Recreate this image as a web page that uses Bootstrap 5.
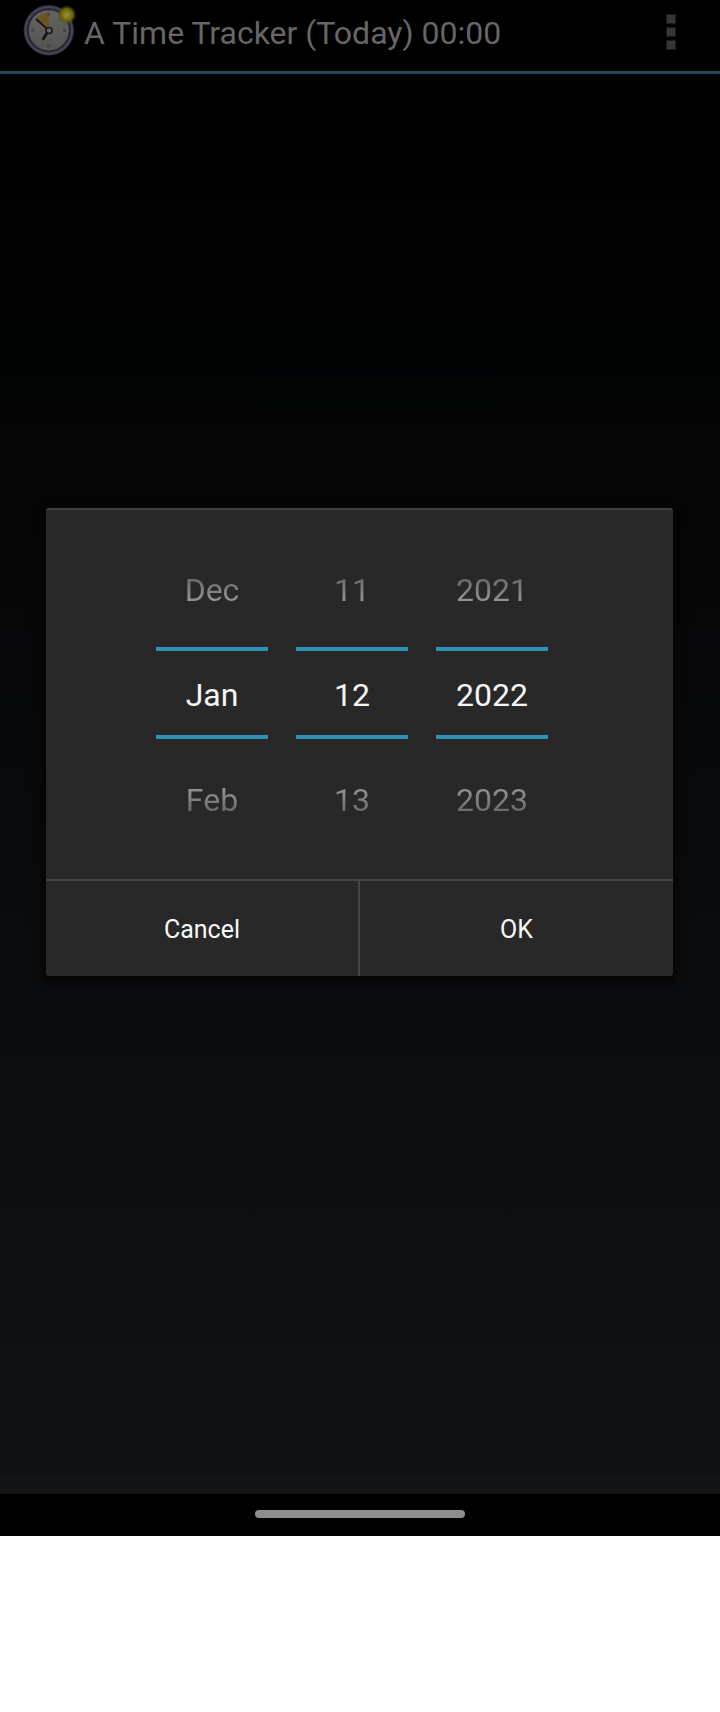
<!DOCTYPE html>
<html lang="en">
<head>
<meta charset="utf-8">
<meta name="viewport" content="width=device-width, initial-scale=1">
<title>A Time Tracker</title>
<link href="https://cdn.jsdelivr.net/npm/bootstrap@5.3.0/dist/css/bootstrap.min.css" rel="stylesheet">
<style>
body { font-family: Roboto, "Liberation Sans", sans-serif; background: #fff; }
.screen { height: 1494px; background: linear-gradient(#000 0, #000 150px, #020302 250px, #020304 370px, #050605 440px, #060606 510px, #07080a 700px, #0b0c0e 1000px, #0e0f11 1250px, #0f1317 1475px, #131415 1476px, #131415 1494px); }
.topbar { height: 74px; border-bottom: 3px solid #19495b; padding: 0 36px 0 20px; }
.app-icon { width: 56px; height: 56px; margin-top: 3px; }
.app-title { font-size: 32px; line-height: 38px; color: #666; margin: 14px 0 0 8px; }
.overflow { gap: 3px; margin: 14px 8px 0 0; background: none; }
.overflow span { width: 10px; height: 10px; background: #363636; border: 1px solid #1b1b1b; }
.picker-dialog { width: 627px; height: 468px; margin: 434px 0 0 46px; background: #282828; border: 0; border-top: 2px solid #404040; border-radius: 3px; box-shadow: 0 4px 12px 2px rgba(0,0,0,.75); }
.wheels { height: 369px; padding: 27px 0 0 110px; gap: 28px; }
.wheel { width: 112px; font-size: 32px; line-height: 38px; }
.wheel > div { text-align: center; background-clip: text; -webkit-background-clip: text; color: transparent; }
.prev { height: 110px; padding-top: 34px; background-image: linear-gradient(#282828 0, #6a6a6a 41px, #949494 64px, #aaa 110px); }
.wheel > .current { height: 92px; padding-top: 25px; border: solid #3090b4; border-width: 4px 0; color: #f5f5f5; }
.next { height: 110px; padding-top: 42px; background-image: linear-gradient(#aaa 0, #949494 49px, #6a6a6a 73px, #282828 110px); }
.actions { height: 97px; border-top: 2px solid #464646; }
.actions .btn { border: 0; border-radius: 0; color: #f8f8f8; font-size: 25px; line-height: 30px; padding: 2px 0 0; }
.actions .cancel-side { width: 314px; border-right: 2px solid #464646; }
.nav-strip { height: 42px; background: #000; padding-bottom: 2px; }
.pill { width: 210px; height: 8px; border-radius: 4px; background: #8e8e8e; }
</style>
</head>
<body>
<main class="screen overflow-hidden">
  <header class="topbar d-flex align-items-start">
    <svg class="app-icon flex-shrink-0" viewBox="20 3 56 56" aria-hidden="true">
      <defs>
        <radialGradient id="sun"><stop offset="0" stop-color="#8b8a50"/><stop offset=".28" stop-color="#87821d"/><stop offset=".65" stop-color="#666006"/><stop offset="1" stop-color="#4b4600" stop-opacity="0"/></radialGradient>
        <linearGradient id="dial" x1="0" y1="0" x2="0" y2="1"><stop offset="0" stop-color="#636361"/><stop offset="1" stop-color="#545452"/></linearGradient>
      </defs>
      <circle cx="48.8" cy="30.3" r="25.2" fill="#30303c"/>
      <circle cx="48.8" cy="30.3" r="23.2" fill="none" stroke="#444456" stroke-width="2"/>
      <circle cx="48.8" cy="30.3" r="20.8" fill="url(#dial)" stroke="#252530" stroke-width="1.4"/>
      <path d="M48.8 30.3L36 18.6Q41.5 12.2 49 12.4Z" fill="#6c5420"/>
      <g fill="#454545"><circle cx="48.5" cy="14.5" r="1.6"/><circle cx="64.5" cy="30.3" r="1.7"/><circle cx="48.5" cy="45.8" r="1.7"/><circle cx="32.8" cy="30.3" r="1.7"/></g>
      <path d="M48.8 30.3L36 19" stroke="#111" stroke-width="1.7"/>
      <path d="M47.8 32L43.2 39" stroke="#111" stroke-width="2.6" stroke-linecap="round"/>
      <circle cx="49" cy="30.5" r="3" fill="#666" stroke="#151515" stroke-width="1.6"/>
      <circle cx="66.8" cy="14.8" r="9.6" fill="url(#sun)"/>
    </svg>
    <h1 class="app-title fw-normal text-nowrap">A Time Tracker (Today) 00:00</h1>
    <button class="overflow d-flex flex-column border-0 p-0 ms-auto" type="button" aria-label="More options"><span></span><span></span><span></span></button>
  </header>

  <section class="picker-dialog card" role="dialog" aria-label="Date">
    <div class="wheels d-flex">
      <div class="wheel"><div class="prev">Dec</div><div class="current">Jan</div><div class="next">Feb</div></div>
      <div class="wheel"><div class="prev">11</div><div class="current">12</div><div class="next">13</div></div>
      <div class="wheel"><div class="prev">2021</div><div class="current">2022</div><div class="next">2023</div></div>
    </div>
    <div class="actions d-flex">
      <button type="button" class="btn cancel-side">Cancel</button>
      <button type="button" class="btn flex-fill">OK</button>
    </div>
  </section>
</main>
<footer class="nav-strip d-flex align-items-center justify-content-center"><div class="pill"></div></footer>
<script src="https://cdn.jsdelivr.net/npm/bootstrap@5.3.0/dist/js/bootstrap.bundle.min.js"></script>
</body>
</html>
